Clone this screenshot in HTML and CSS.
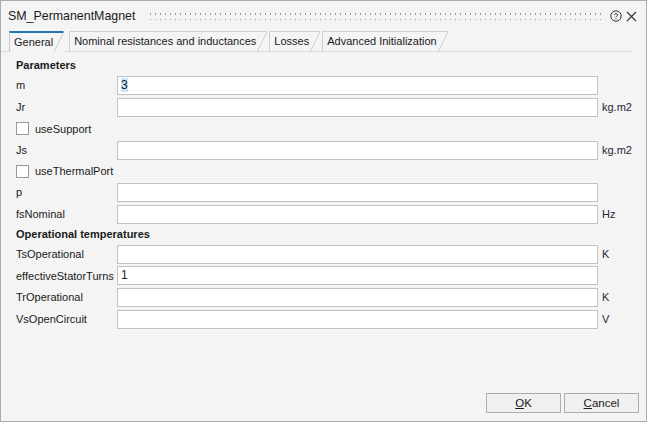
FILE: index.html
```html
<!DOCTYPE html>
<html>
<head>
<meta charset="utf-8">
<link rel="stylesheet" href="styles.css">
</head>
<body>
<div class="window">
  <div class="titlebar">
    <span class="title">SM_PermanentMagnet</span>
    <span class="gripper"></span>
    <svg class="help" width="12" height="12" viewBox="0 0 12 12">
      <circle cx="6" cy="6" r="5.2" fill="none" stroke="#333" stroke-width="1"/>
      <path d="M4.3 4.7 C4.3 3.4 7.7 3.4 7.7 4.8 C7.7 6 6 6 6 7.2" fill="none" stroke="#333" stroke-width="1"/>
      <rect x="5.5" y="8.2" width="1" height="1" fill="#333"/>
    </svg>
    <svg class="close" width="11" height="11" viewBox="0 0 11 11">
      <path d="M1 1 L10 10 M10 1 L1 10" stroke="#333" stroke-width="1.1"/>
    </svg>
  </div>
  <div class="tabs">
    <div class="tab active">General</div>
    <div class="tab">Nominal resistances and inductances</div>
    <div class="tab">Losses</div>
    <div class="tab">Advanced Initialization</div>
  </div>
  <div class="content">
    <div class="form">
      <div class="header h1">Parameters</div>
      <div class="row"><span class="label">m</span><span class="input"><span class="sel">3</span></span><span class="unit"></span></div>
      <div class="row"><span class="label">Jr</span><span class="input"></span><span class="unit">kg.m2</span></div>
      <div class="check c1"><span class="box"></span><span>useSupport</span></div>
      <div class="row"><span class="label">Js</span><span class="input"></span><span class="unit">kg.m2</span></div>
      <div class="check c2"><span class="box"></span><span>useThermalPort</span></div>
      <div class="row"><span class="label">p</span><span class="input"></span><span class="unit"></span></div>
      <div class="row"><span class="label">fsNominal</span><span class="input"></span><span class="unit">Hz</span></div>
      <div class="header h2">Operational temperatures</div>
      <div class="row"><span class="label">TsOperational</span><span class="input"></span><span class="unit">K</span></div>
      <div class="row short"><span class="label">effectiveStatorTurns</span><span class="input">1</span><span class="unit"></span></div>
      <div class="row"><span class="label">TrOperational</span><span class="input"></span><span class="unit">K</span></div>
      <div class="row"><span class="label">VsOpenCircuit</span><span class="input"></span><span class="unit">V</span></div>
    </div>
    <div class="buttons">
      <button class="btn"><u>O</u>K</button>
      <button class="btn"><u>C</u>ancel</button>
    </div>
  </div>
</div>
</body>
</html>
```

FILE: styles.css
```css
* { box-sizing: border-box; }
html, body { margin: 0; padding: 0; }
body {
  font-family: "Liberation Sans", Arial, sans-serif;
  font-size: 11px;
  color: #1a1a1a;
}
.window {
  width: 647px;
  height: 422px;
  background: #f4f4f4;
  border: 1px solid #ababab;
  display: flex;
  flex-direction: column;
}
.titlebar {
  height: 30px;
  display: flex;
  align-items: center;
  padding: 0 9px 0 7px;
}
.title {
  font-size: 12.4px;
  color: #1a1a1a;
  margin-right: 13px;
}
.gripper {
  flex: 1;
  height: 8px;
  margin-right: 7px;
  background-image: radial-gradient(circle, #9a9a9a 0.8px, transparent 1.1px);
  background-size: 5px 6px;
  background-position: 0 -1px;
}
.help { margin-right: 4px; }
.tabs {
  height: 21px;
  display: flex;
  align-items: flex-end;
  padding-left: 8px;
  border-bottom: 1px solid #dcdcdc;
  margin-right: 14px;
}
.tab {
  position: relative;
  height: 20px;
  line-height: 18px;
  padding: 0 11px 0 4px;
  margin-right: 2px;
  border-left: 1px solid #cfcfcf;
  border-top: 1px solid #cfcfcf;
  color: #1a1a1a;
}
.tab::after {
  content: "";
  position: absolute;
  right: 0;
  top: 0;
  width: 10px;
  height: 20px;
  background: linear-gradient(to bottom right, transparent calc(50% - 0.7px), #c4c4c4 50%, transparent calc(50% + 0.7px));
}
.tab.active {
  height: 21px;
  margin-bottom: -1px;
  background: #f4f4f4;
  border-top: 2px solid #1f78b4;
  border-left: 1px solid #c8c8c8;
  line-height: 18px;
  padding-right: 11px;
  margin-right: 5px;
}
.tab.active::after { height: 21px; top: -2px; }
.content {
  flex: 1;
  display: flex;
  flex-direction: column;
  padding: 3px 0 0 15px;
}
.form { flex: 1; }
.header {
  font-weight: bold;
  display: flex;
  align-items: center;
  height: 19px;
}
.h2 { height: 18px; }
.row {
  display: flex;
  align-items: center;
  height: 22px;
}
.row.short { height: 21px; }
.label { width: 101px; white-space: nowrap; }
.input {
  width: 481px;
  height: 19px;
  background: #fff;
  border: 1px solid #c2c2c2;
  padding-left: 3px;
  line-height: 17px;
  font-size: 12px;
}
.sel { background: #cce4f7; }
.unit { margin-left: 4px; color: #1e1e38; }
.check {
  display: flex;
  align-items: center;
  height: 21px;
}
.check.c2 { height: 20px; }
.box {
  width: 13px;
  height: 13px;
  background: #fff;
  border: 1px solid #9a9a9a;
  margin-right: 6px;
}
.buttons {
  display: flex;
  justify-content: flex-end;
  gap: 3px;
  padding: 0 7px 8px 0;
}
.btn {
  width: 75px;
  height: 20px;
  font-family: "Liberation Sans", Arial, sans-serif;
  font-size: 11.5px;
  color: #1a1a1a;
  background: #f0f0f0;
  border: 1px solid #adadad;
  padding: 0;
}
```
